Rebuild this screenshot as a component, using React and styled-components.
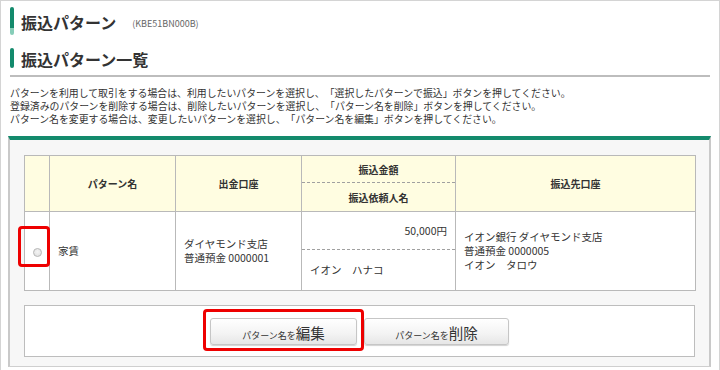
import React from 'react'
import styled, { createGlobalStyle } from "styled-components"

const GlobalStyle = createGlobalStyle`
    html, body {
        margin: 0;
        padding: 0;
        background: #ffffff;
    }
    body {
        font-family: "Noto Sans CJK JP", "Noto Sans", sans-serif;
        color: #333333;
        text-spacing-trim: space-all;
    }
`

const GREEN = "#138a6c"

const Frame = styled.div`
    width: 720px;
    height: 370px;
    box-sizing: border-box;
    border: 1px solid #d4d4d4;
    border-bottom: none;
    padding: 6px 8px 0 7px;
    overflow: hidden;
`

const Heading = styled.div`
    display: flex;
    align-items: center;
    gap: 7px;
    height: ${props => props.$tall ? "28px" : "20px"};
    margin: ${props => props.$tall ? "0" : "13px"} 0 0 2px;
`

const Bar = styled.span`
    width: 4px;
    height: 100%;
    border-radius: 2px;
    background: ${props => props.$split
        ? `linear-gradient(to bottom, ${GREEN} 0, ${GREEN} 74%, #86cdb8 74%, #86cdb8 100%)`
        : GREEN};
`

const Title = styled.h1`
    margin: 0;
    font-size: 16px;
    font-weight: 700;
    line-height: 20px;
    color: #333333;
    padding-top: 2px;
`

const Code = styled.span`
    font-size: 9px;
    color: #666666;
    margin-left: 9px;
    padding-top: 5px;
`

const Divider = styled.hr`
    margin: 7px 1px 0 2px;
    border: none;
    height: 2px;
    background: #bdbdbd;
`

const Notes = styled.div`
    margin: 10px 0 0 2px;
    font-size: 9.9px;
    line-height: 13px;
    color: #333333;
`

const Line = styled.p`
    margin: 0;
    height: 13px;
    white-space: nowrap;
`

const Panel = styled.div`
    margin-top: 10px;
    height: 231px;
    box-sizing: border-box;
    border-top: 4px solid ${GREEN};
    border-left: 2px solid #c9c9c9;
    border-right: 2px solid #c9c9c9;
    border-bottom: 1px solid #cfcfcf;
    background: #f7f7f7;
    padding: 15px 14px 0 14px;
`

const Table = styled.table`
    width: 671px;
    border-collapse: collapse;
    table-layout: fixed;
    background: #ffffff;
    font-size: 10.5px;
    color: #333333;
`

const Th = styled.th`
    background: #fffde1;
    border: 1px solid #b9b9b9;
    border-top: ${props => props.$lower ? "1px dashed #a0a0a0" : "1px solid #b9b9b9"};
    border-bottom: ${props => props.$upper ? "1px dashed #a0a0a0" : "1px solid #b9b9b9"};
    font-size: 10px;
    font-weight: 700;
    text-align: center;
    vertical-align: middle;
    padding: 0;
    height: ${props => props.$h || "auto"};
`

const Td = styled.td`
    border: 1px solid #b9b9b9;
    border-top: ${props => props.$lower ? "1px dashed #a0a0a0" : "1px solid #b9b9b9"};
    border-bottom: ${props => props.$upper ? "1px dashed #a0a0a0" : "1px solid #b9b9b9"};
    text-align: ${props => props.$align || "left"};
    vertical-align: middle;
    padding: 0 8px;
    line-height: 14px;
    height: ${props => props.$h || "auto"};
`

const RadioCell = styled.td`
    border: 1px solid #b9b9b9;
    padding: 0;
    text-align: center;
    vertical-align: middle;
`

const RadioWrap = styled.span`
    position: relative;
    display: inline-block;
    width: 9px;
    height: 9px;
    vertical-align: middle;
`

const Radio = styled.span`
    display: block;
    width: 9px;
    height: 9px;
    box-sizing: border-box;
    border-radius: 50%;
    border: 1px solid #b8b8b8;
    background: radial-gradient(circle at 50% 40%, #f4f4f4 0, #dcdcdc 100%);
`

const Highlight = styled.span`
    position: absolute;
    top: ${props => props.$top}px;
    left: ${props => props.$left}px;
    right: ${props => props.$right}px;
    bottom: ${props => props.$bottom}px;
    border: 3px solid #ee0000;
    border-radius: 4px;
    pointer-events: none;
`

const ButtonBox = styled.div`
    margin-top: 14px;
    width: 671px;
    height: 52px;
    box-sizing: border-box;
    border: 1px solid #bdbdbd;
    background: #ffffff;
    display: flex;
    align-items: center;
    justify-content: center;
    gap: 7px;
`

const ButtonSlot = styled.span`
    position: relative;
    display: inline-flex;
`

const Button = styled.button`
    width: ${props => props.$w}px;
    height: 27px;
    box-sizing: border-box;
    border: 1px solid #c6c6c6;
    border-radius: 3px;
    background: linear-gradient(to bottom, #ffffff 0%, #f3f3f3 60%, #e6e6e6 100%);
    box-shadow: 0 1px 1px rgba(0, 0, 0, 0.18);
    font-family: "Noto Sans CJK JP", "Noto Sans", sans-serif;
    color: #333333;
    display: flex;
    align-items: baseline;
    justify-content: center;
    padding: 3px 0 0 0;
    cursor: pointer;
`

const Small = styled.span`
    font-size: 9px;
`

const Big = styled.span`
    font-size: 14.5px;
`

export default function App() {
    return (
        <>
            <GlobalStyle />
            <Frame>
                <Heading $tall>
                    <Bar $split />
                    <Title>振込パターン</Title>
                    <Code>(KBE51BN000B)</Code>
                </Heading>
                <Heading>
                    <Bar />
                    <Title>振込パターン一覧</Title>
                </Heading>
                <Divider />
                <Notes>
                    <Line>パターンを利用して取引をする場合は、利用したいパターンを選択し、「選択したパターンで振込」ボタンを押してください。</Line>
                    <Line>登録済みのパターンを削除する場合は、削除したいパターンを選択し、「パターン名を削除」ボタンを押してください。</Line>
                    <Line>パターン名を変更する場合は、変更したいパターンを選択し、「パターン名を編集」ボタンを押してください。</Line>
                </Notes>
                <Panel>
                    <Table>
                        <colgroup>
                            <col style={{ width: 25 }} />
                            <col style={{ width: 126 }} />
                            <col style={{ width: 126 }} />
                            <col style={{ width: 154 }} />
                            <col style={{ width: 240 }} />
                        </colgroup>
                        <thead>
                            <tr>
                                <Th rowSpan={2}></Th>
                                <Th rowSpan={2}>パターン名</Th>
                                <Th rowSpan={2}>出金口座</Th>
                                <Th $upper $h="26px">振込金額</Th>
                                <Th rowSpan={2}>振込先口座</Th>
                            </tr>
                            <tr>
                                <Th $lower $h="28px">振込依頼人名</Th>
                            </tr>
                        </thead>
                        <tbody>
                            <tr>
                                <RadioCell rowSpan={2}>
                                    <RadioWrap>
                                        <Radio />
                                        <Highlight $top={-22} $left={-15} $right={-8} $bottom={-10} />
                                    </RadioWrap>
                                </RadioCell>
                                <Td rowSpan={2}>家賃</Td>
                                <Td rowSpan={2}>ダイヤモンド支店<br />普通預金 0000001</Td>
                                <Td $upper $align="right" $h="37px">50,000円</Td>
                                <Td rowSpan={2}>イオン銀行 ダイヤモンド支店<br />普通預金 0000005<br />イオン　タロウ</Td>
                            </tr>
                            <tr>
                                <Td $lower $h="40px">イオン　ハナコ</Td>
                            </tr>
                        </tbody>
                    </Table>
                    <ButtonBox>
                        <ButtonSlot>
                            <Button $w={147}><Small>パターン名を</Small><Big>編集</Big></Button>
                            <Highlight $top={-9} $left={-7} $right={-7} $bottom={-6} />
                        </ButtonSlot>
                        <ButtonSlot>
                            <Button $w={145}><Small>パターン名を</Small><Big>削除</Big></Button>
                        </ButtonSlot>
                    </ButtonBox>
                </Panel>
            </Frame>
        </>
    )
}
